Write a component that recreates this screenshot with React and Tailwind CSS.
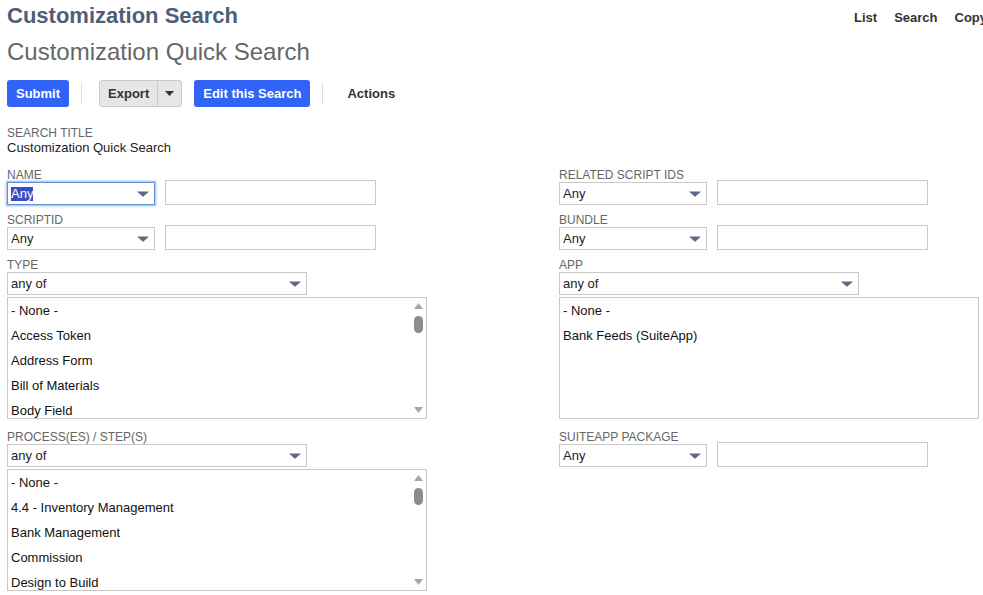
import React from "react";

function Caret({ className = "" }) {
  return (
    <svg width="12" height="6" viewBox="0 0 12 6" className={className}>
      <path d="M0.6 0.4 H11.4 Q12 0.4 11.5 1 L6.4 5.6 Q6 6 5.6 5.6 L0.5 1 Q0 0.4 0.6 0.4 Z" fill="#5b6b86" />
    </svg>
  );
}

function Select({ value, width, focused }) {
  return (
    <div
      className={
        "flex h-[23px] shrink-0 items-center justify-between bg-white pl-[3px] pr-[5px] text-[13px] text-[#222] " +
        (focused
          ? "border border-[#5f8fd8] shadow-[0_0_2px_1px_rgba(110,155,225,0.75)]"
          : "border border-[#c9c9c9]")
      }
      style={{ width }}
    >
      {focused ? (
        <span className="bg-[#3a4cc2] leading-[14px] text-white">{value}</span>
      ) : (
        <span className="leading-[15px]">{value}</span>
      )}
      <Caret />
    </div>
  );
}

function Label({ children }) {
  return (
    <div className="h-[12px] text-[12px] leading-[14px] whitespace-nowrap text-[#666] uppercase">{children}</div>
  );
}

function FieldWithInput({ label, focused }) {
  return (
    <div className="flex flex-col">
      <Label>{label}</Label>
      <div className="flex h-[25px] items-end">
        <Select value="Any" width={148} focused={focused} />
        <div className="ml-[10px] h-[25px] w-[211px] border border-[#c9c9c9] bg-white" />
      </div>
    </div>
  );
}

function ScrollTri({ up }) {
  return (
    <svg width="9" height="6" viewBox="0 0 9 6">
      {up ? (
        <path d="M4.5 0 L9 6 H0 Z" fill="#a6a6a6" />
      ) : (
        <path d="M0 0 H9 L4.5 6 Z" fill="#a6a6a6" />
      )}
    </svg>
  );
}

function ListBox({ items, scroll }) {
  return (
    <div className="mt-[2px] flex h-[122px] w-[420px] overflow-hidden border border-[#c9c9c9] bg-white">
      <div className="flex-1 overflow-hidden">
        {items.map((t) => (
          <div key={t} className="flex h-[25px] items-center pl-[3px] text-[13px] text-[#111] whitespace-nowrap">
            {t}
          </div>
        ))}
      </div>
      {scroll && (
        <div className="flex w-[16px] flex-col items-center pt-[5px] pb-[5px]">
          <ScrollTri up />
          <div className="mt-[7px] h-[17px] w-[9px] rounded-full bg-[#8c8c8c]" />
          <div className="flex-1" />
          <ScrollTri />
        </div>
      )}
    </div>
  );
}

function MultiField({ label, items, scroll }) {
  return (
    <div className="flex flex-col">
      <Label>{label}</Label>
      <div className="mt-[2px]">
        <Select value="any of" width={300} />
      </div>
      <ListBox items={items} scroll={scroll} />
    </div>
  );
}

export default function App() {
  return (
    <div className="h-[595px] w-[983px] overflow-hidden bg-white pl-[7px] font-['Liberation_Sans',Arial,sans-serif]">
      {/* header */}
      <div className="flex items-start">
        <div className="w-[847px] shrink-0 pt-[3px] text-[22px] leading-[26px] font-bold text-[#4d5e79]">
          Customization Search
        </div>
        <div className="mt-[11px] flex shrink-0 gap-[17px] text-[13px] leading-[13px] font-bold text-[#333]">
          <span>List</span>
          <span>Search</span>
          <span>Copy</span>
        </div>
      </div>
      <div className="mt-[9px] text-[24px] leading-[28px] text-[#666]">Customization Quick Search</div>

      {/* buttons */}
      <div className="mt-[14px] flex h-[27px] items-center">
        <button className="h-[27px] rounded-[3px] bg-[#3063f6] px-[9px] text-[13px] font-bold text-white">
          Submit
        </button>
        <div className="ml-[12px] h-[22px] w-px bg-[#dcdcdc]" />
        <div className="ml-[17px] flex h-[27px] overflow-hidden rounded-[3px] border border-[#cacaca] bg-[#e6e6e6]">
          <div className="flex items-center pr-[8px] pl-[8px] text-[13px] font-bold text-[#333]">Export</div>
          <div className="flex w-[24px] items-center justify-center border-l border-[#cacaca]">
            <svg width="9" height="5" viewBox="0 0 9 5">
              <path d="M0 0 H9 L4.5 5 Z" fill="#333" />
            </svg>
          </div>
        </div>
        <button className="ml-[12px] h-[27px] rounded-[3px] bg-[#3063f6] px-[9px] text-[13px] font-bold text-white">
          Edit this Search
        </button>
        <div className="ml-[12px] h-[22px] w-px bg-[#dcdcdc]" />
        <div className="ml-[24px] text-[13px] font-bold text-[#333]">Actions</div>
      </div>

      {/* search title */}
      <div className="mt-[20px]">
        <div className="h-[12px] text-[12px] leading-[12px] whitespace-nowrap text-[#666] uppercase">Search Title</div>
        <div className="mt-[1px] text-[13px] leading-[15px] text-[#222]">Customization Quick Search</div>
      </div>

      {/* fields */}
      <div className="mt-[13px] flex">
        <div className="flex w-[552px] shrink-0 flex-col">
          <FieldWithInput label="Name" focused />
          <div className="mt-[8px]">
            <FieldWithInput label="ScriptID" />
          </div>
          <div className="mt-[8px]">
            <MultiField
              label="Type"
              scroll
              items={["- None -", "Access Token", "Address Form", "Bill of Materials", "Body Field"]}
            />
          </div>
          <div className="mt-[11px]">
            <MultiField
              label="Process(es) / Step(s)"
              scroll
              items={["- None -", "4.4 - Inventory Management", "Bank Management", "Commission", "Design to Build"]}
            />
          </div>
        </div>
        <div className="flex flex-col">
          <FieldWithInput label="Related Script IDs" />
          <div className="mt-[8px]">
            <FieldWithInput label="Bundle" />
          </div>
          <div className="mt-[8px]">
            <MultiField label="App" items={["- None -", "Bank Feeds (SuiteApp)"]} />
          </div>
          <div className="mt-[11px]">
            <FieldWithInput label="SuiteApp Package" />
          </div>
        </div>
      </div>
    </div>
  );
}
